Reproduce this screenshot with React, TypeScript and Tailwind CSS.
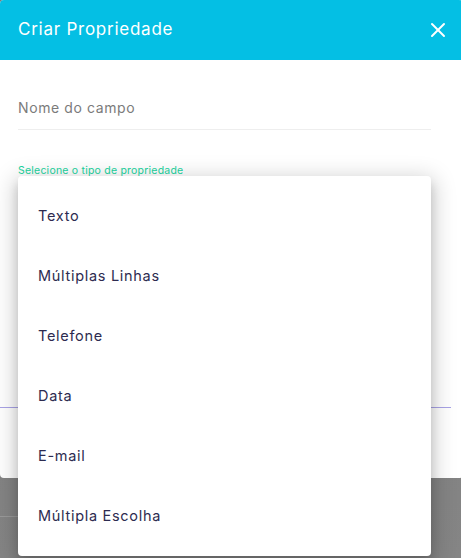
import React from 'react';
import { X } from 'lucide-react';

const tipos = ['Texto', 'Múltiplas Linhas', 'Telefone', 'Data', 'E-mail', 'Múltipla Escolha'];

const App = () => {
    return (
        <div
            className="relative h-[558px] w-[461px] overflow-hidden bg-gradient-to-b from-[#7c7c7c] to-[#858585]"
            style={{ fontFamily: 'Inter, "Open Sans", sans-serif' }}
        >
            {/* Modal */}
            <div className="h-[478px] w-[463px] overflow-hidden rounded-[4px] bg-white">
                <div className="flex h-[60px] items-center justify-between bg-[#04bfe4] pl-[18px] pr-[13px]">
                    <h1 className="text-[17px] font-normal tracking-[0.75px] text-white">Criar Propriedade</h1>
                    <X size={24} strokeWidth={2} className="text-white" />
                </div>

                <div className="pl-[18px] pr-[32px] pt-[25px]">
                    <div className="flex h-[45px] items-center border-b border-[#eeeeee] text-[14px] tracking-[0.6px] text-[#7b7b7b]">
                        Nome do campo
                    </div>
                    <p className="mt-[33px] text-[10.5px] tracking-[0.22px] text-[#1ad5a0]">Selecione o tipo de propriedade</p>
                </div>

                <div className="mt-[228px] h-px w-[451px] bg-[#a9a3e6]" />
            </div>

            {/* linha da página atrás do fundo */}
            <div className="mt-[38px] h-px w-[20px] bg-[#9a9a9a]" />

            {/* Menu do select */}
            <ul className="absolute left-[18px] top-[176px] w-[413px] rounded-[4px] bg-white pb-[10px] pt-[10px] shadow-[0_5px_22px_4px_rgba(0,0,0,0.18),0_8px_10px_1px_rgba(0,0,0,0.12)]">
                {tipos.map((tipo) => (
                    <li key={tipo} className="flex h-[60px] items-center px-[20px] text-[14.5px] tracking-[0.7px] text-[#2d2b50]">
                        {tipo}
                    </li>
                ))}
            </ul>
        </div>
    );
};

export default App;
